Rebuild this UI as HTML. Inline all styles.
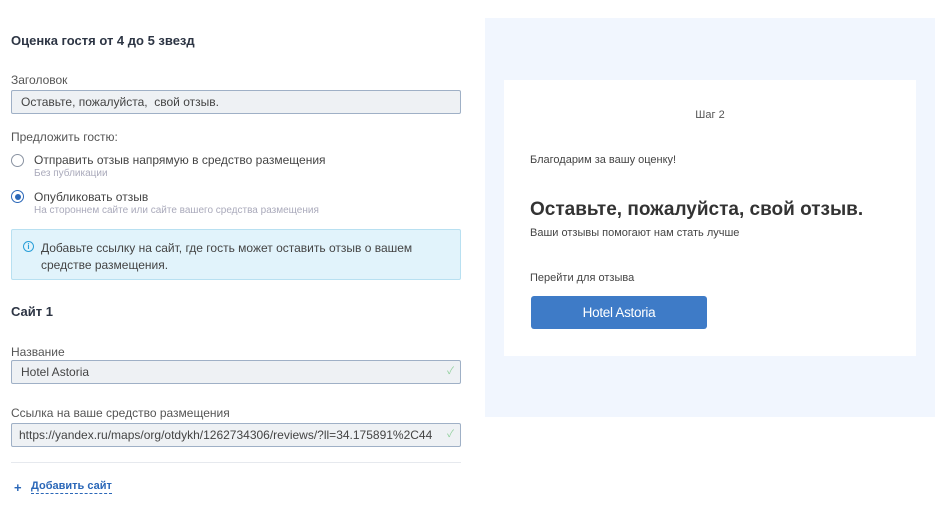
<!DOCTYPE html>
<html><head><meta charset="utf-8"><style>
body{margin:0;width:946px;height:507px;background:#fff;font-family:"Liberation Sans","Noto Sans CJK SC",sans-serif;position:relative;overflow:hidden;color:#333}
.a{position:absolute;white-space:nowrap}
.h{font-weight:bold;font-size:13px;color:#2d3544}
.lbl{font-size:12px;color:#555}
.inp{position:absolute;left:11px;width:448px;height:22px;background:#eef1f4;border:1px solid #9fb0c6;border-radius:2px;font-size:12px;color:#444;line-height:22px;padding-left:9px;box-sizing:content-box}
.chk{position:absolute;right:6px;top:0;color:#8fcf9b;font-size:10px}
.radio{position:absolute;left:11px;width:13px;height:13px;border:1.3px solid #8a93a2;border-radius:50%;box-sizing:border-box}
.sub{font-size:10px;color:#aab}
</style></head><body>
<div class="a h" style="left:11px;top:33px">Оценка гостя от 4 до 5 звезд</div>
<div class="a lbl" style="left:11px;top:73px">Заголовок</div>
<div class="inp" style="top:90px;width:439px">Оставьте, пожалуйста,&nbsp; свой отзыв.</div>
<div class="a lbl" style="left:11px;top:130px">Предложить гостю:</div>
<div class="radio" style="top:154px"></div>
<div class="a" style="left:34px;top:153px;font-size:12px;color:#444">Отправить отзыв напрямую в средство размещения</div>
<div class="a sub" style="left:34px;top:168px">Без публикации</div>
<div class="radio" style="top:190px;border-color:#2a67b8"><div style="position:absolute;left:2.5px;top:2.5px;width:6px;height:6px;border-radius:50%;background:#2a67b8"></div></div>
<div class="a" style="left:34px;top:190px;font-size:12px;color:#444">Опубликовать отзыв</div>
<div class="a sub" style="left:34px;top:205px">На стороннем сайте или сайте вашего средства размещения</div>
<div style="position:absolute;left:11px;top:229px;width:448px;height:49px;background:#e1f3fb;border:1px solid #b8e0f1;border-radius:2px"></div>
<div class="a" style="left:23px;top:241px;width:9px;height:9px;border:1px solid #2a9fd8;border-radius:50%;font-size:8px;line-height:9px;text-align:center;color:#2a9fd8;font-weight:bold">i</div>
<div class="a" style="left:41px;top:240px;font-size:12px;color:#444;line-height:17px">Добавьте ссылку на сайт, где гость может оставить отзыв о вашем<br>средстве размещения.</div>
<div class="a h" style="left:11px;top:304px">Сайт 1</div>
<div class="a lbl" style="left:11px;top:345px">Название</div>
<div class="inp" style="top:360px;width:439px">Hotel Astoria<span class="chk">✓</span></div>
<div class="a lbl" style="left:11px;top:406px">Ссылка на ваше средство размещения</div>
<div class="inp" style="top:423px;width:441px;padding-left:7px">https://yandex.ru/maps/org/otdykh/1262734306/reviews/?ll=34.175891%2C44<span class="chk">✓</span></div>
<div class="a" style="left:11px;top:462px;width:450px;height:1px;background:#e6e9ee"></div>
<div class="a" style="left:14px;top:480px;font-size:13px;color:#2a67b8;font-weight:bold">+</div>
<div class="a" style="left:31px;top:480px;font-size:11px;font-weight:bold;color:#2a67b8;border-bottom:1px dashed #2a67b8;line-height:13px">Добавить сайт</div>

<div style="position:absolute;left:485px;top:18px;width:450px;height:399px;background:#f1f6fe"></div>
<div style="position:absolute;left:504px;top:80px;width:412px;height:276px;background:#fff"></div>
<div class="a" style="left:504px;width:412px;text-align:center;top:109px;font-size:11px;color:#555">Шаг 2</div>
<div class="a" style="left:530px;top:154px;font-size:11px;color:#444">Благодарим за вашу оценку!</div>
<div class="a" style="left:530px;top:199px;font-size:19px;font-weight:bold;color:#333">Оставьте, пожалуйста, свой отзыв.</div>
<div class="a" style="left:530px;top:227px;font-size:11px;color:#444">Ваши отзывы помогают нам стать лучше</div>
<div class="a" style="left:530px;top:272px;font-size:11px;color:#444">Перейти для отзыва</div>
<div class="a" style="left:531px;top:296px;width:176px;height:33px;background:#3e7bc7;border-radius:3px;color:#fff;font-size:13.5px;line-height:33px;text-align:center;letter-spacing:-0.3px">Hotel Astoria</div>
</body></html>
